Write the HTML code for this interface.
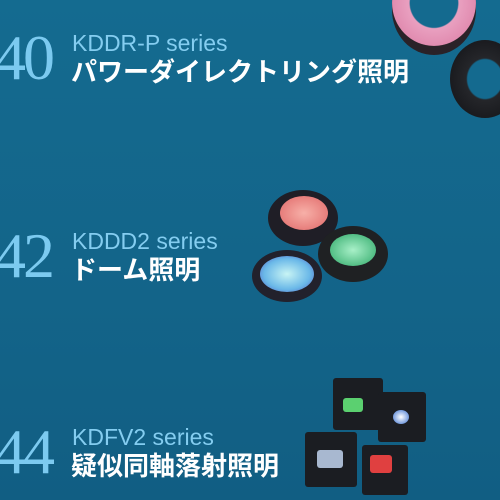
<!DOCTYPE html>
<html><head><meta charset="utf-8"><style>
body{margin:0;width:500px;height:500px;overflow:hidden;background:linear-gradient(#146b90,#136489 60%,#115e83);position:relative;font-family:"Liberation Sans","Noto Sans CJK JP",sans-serif}
.n{position:absolute;left:-6px;font-family:"Liberation Serif",serif;font-size:64px;color:#7ccaf0;line-height:1;letter-spacing:-3px}
.s{position:absolute;left:72px;font-size:23px;color:#84cdf0;line-height:1}
.j{position:absolute;left:71px;font-size:26px;color:#fff;font-weight:bold;line-height:1;font-family:"Noto Sans CJK JP",sans-serif;letter-spacing:0px}
.a{position:absolute;border-radius:50%}
.b{position:absolute;background:#1b1d22;border-radius:3px}
</style></head><body>
<div class="n" style="top:26px">40</div>
<div class="s" style="top:32px">KDDR-P series</div>
<div class="j" style="top:58px">パワーダイレクトリング照明</div>
<div class="n" style="top:224px">42</div>
<div class="s" style="top:230px">KDDD2 series</div>
<div class="j" style="top:256px">ドーム照明</div>
<div class="n" style="top:420px">44</div>
<div class="s" style="top:426px">KDFV2 series</div>
<div class="j" style="top:452px">疑似同軸落射照明</div>

<div class="a" style="left:392px;top:-35px;width:84px;height:90px;background:#2a2228"></div>
<div class="a" style="left:392px;top:-40px;width:84px;height:86px;background:radial-gradient(#146a8f 40%,#e9a0c0 42%,#e18cb0 70%,#3a2a30 72%)"></div>
<div class="a" style="left:450px;top:40px;width:70px;height:78px;background:radial-gradient(#146a8f 35%,#25262a 38%,#1a1b1f 70%)"></div>

<div class="a" style="left:268px;top:190px;width:70px;height:56px;background:#1f1e26"></div>
<div class="a" style="left:280px;top:196px;width:48px;height:34px;background:radial-gradient(#f7b0a8,#e06868)"></div>
<div class="a" style="left:318px;top:226px;width:70px;height:56px;background:#1f2123"></div>
<div class="a" style="left:330px;top:234px;width:46px;height:32px;background:radial-gradient(#a8f0c8,#2ea868)"></div>
<div class="a" style="left:252px;top:250px;width:70px;height:52px;background:#22212c"></div>
<div class="a" style="left:260px;top:256px;width:54px;height:36px;background:radial-gradient(#c8f4f4,#6ab8e8 60%,#5050c0)"></div>

<div class="b" style="left:333px;top:378px;width:50px;height:52px"></div>
<div class="b" style="left:343px;top:398px;width:20px;height:14px;background:#5bd070"></div>
<div class="b" style="left:378px;top:392px;width:48px;height:50px"></div>
<div class="a" style="left:393px;top:410px;width:16px;height:14px;background:radial-gradient(#fff,#3a70d0)"></div>
<div class="b" style="left:305px;top:432px;width:52px;height:55px"></div>
<div class="b" style="left:317px;top:450px;width:26px;height:18px;background:#a8b8d0"></div>
<div class="b" style="left:362px;top:445px;width:46px;height:50px"></div>
<div class="b" style="left:370px;top:455px;width:22px;height:18px;background:#e04040"></div>
</body></html>
